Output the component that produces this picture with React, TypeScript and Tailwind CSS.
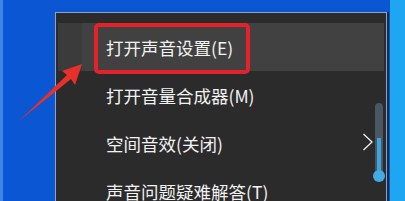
import React from 'react';

const items = [
  { label: '打开声音设置(E)', active: true },
  { label: '打开音量合成器(M)' },
  { label: '空间音效(关闭)', sub: true },
  { label: '声音问题疑难解答(T)' },
];

export default function App() {
  return (
    <div
      className="relative flex h-[201px] w-[405px] overflow-hidden bg-[#0b56d2]"
      style={{ fontFamily: '"Microsoft YaHei", "Noto Sans CJK SC", sans-serif' }}
    >
      <div className="w-[3px] bg-[#3b86e6]" />
      <div className="flex flex-1 pt-[12px] pl-[52px]">
        <div className="relative w-[332px] border border-b-0 border-[#8ea4c6] bg-[#2b2b2b] px-[2px] pt-[10px]">
          {items.map((item) => (
            <div
              key={item.label}
              className={`relative flex h-[48px] items-center pl-[48px] pt-[2px] text-[17.5px] text-[#f2f2f2] ${
                item.active ? 'bg-[#414141]' : ''
              }`}
            >
              {item.active && <div className="absolute left-0 top-0 h-full w-[24px] bg-[#3b3b3b]" />}
              <span className="relative whitespace-nowrap">{item.label}</span>
              {item.sub && (
                <svg className="absolute left-[304px] top-[14px]" width="12" height="18" viewBox="0 0 12 18">
                  <path d="M1.5 1 L10 9 L1.5 17" fill="none" stroke="#f0f0f0" strokeWidth="1.3" />
                </svg>
              )}
            </div>
          ))}

          {/* volume slider behind */}
          <div className="absolute left-[319px] top-[90px] h-[78px] w-[8px] rounded-full bg-[#4a5663]">
            <div className="absolute left-[2px] top-[35px] h-[38px] w-[4px] bg-[#3aa6de]" />
            <div className="absolute left-[-2px] top-[67px] h-[12px] w-[12px] rounded-full bg-[#41ace4]" />
          </div>
        </div>
        <div className="w-[2px] bg-[#1a2a4a]" />
      </div>
      <div className="w-[15px] bg-[#1ea6f2]" />

      {/* annotation box */}
      <div className="absolute left-[94px] top-[23px] h-[51px] w-[156px] rounded-[5px] border-[4px] border-[#e5222a]" />

      {/* annotation arrow */}
      <svg className="absolute left-0 top-0" width="405" height="201" viewBox="0 0 405 201">
        <polygon points="82,64 62,71 67,75 19,121 71,79 75,85" fill="#e8302a" />
      </svg>
    </div>
  );
}
